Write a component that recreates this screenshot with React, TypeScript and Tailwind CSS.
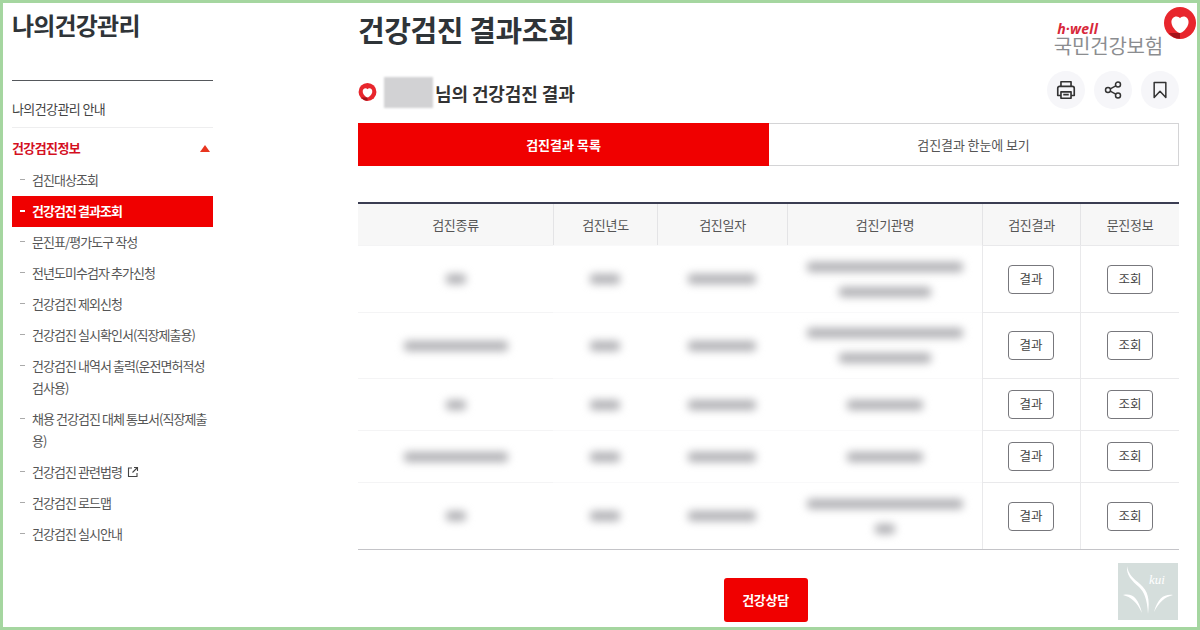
import React from "react";

const menuItems = [
  { label: "검진대상조회" },
  { label: "건강검진 결과조회", active: true },
  { label: "문진표/평가도구 작성" },
  { label: "전년도미수검자 추가신청" },
  { label: "건강검진 제외신청" },
  { label: "건강검진 실시확인서(직장제출용)" },
  { label: "건강검진 내역서 출력(운전면허적성검사용)" },
  { label: "채용 건강검진 대체 통보서(직장제출용)" },
  { label: "건강검진 관련법령", external: true },
  { label: "건강검진 로드맵" },
  { label: "건강검진 실시안내" },
];

const rows = [
  { h: "h-[67px]", a: 20, b: 30, c: 68, d: [156, 92] },
  { h: "h-[66px]", a: 104, b: 30, c: 68, d: [156, 92] },
  { h: "h-[52px]", a: 20, b: 30, c: 68, d: [76] },
  { h: "h-[52px]", a: 104, b: 30, c: 68, d: [76] },
  { h: "h-[67px]", a: 20, b: 30, c: 68, d: [156, 20] },
];

const cols = "grid grid-cols-[195px_104px_130px_195px_98px_99px]";

function Blur({ w }: { w: number }) {
  return <div className="h-[10px] rounded-sm bg-[#b0b0b4] blur-[4px]" style={{ width: w }} />;
}

function HeartMark({ className }: { className: string }) {
  return (
    <svg viewBox="0 0 34 34" className={className}>
      <circle cx="17" cy="16" r="16" fill="#e8262d" />
      <path d="M17 26c-2 0-8-5-8.500-10C8 12 10.500 9.500 13.500 9.500c1.500 0 2.700.7 3.500 1.800.8-1.100 2-1.800 3.500-1.800 3 0 5.500 2.500 5 6.500-.5 5-6.500 10-8.500 10z" fill="#fff" />
      <path d="M6 26h11v5.500c-4 .5-8-1.500-11-5.500z" fill="#a3121a" />
    </svg>
  );
}

function ActionButton({ children }: { children: React.ReactNode }) {
  return (
    <div className="flex h-[38px] w-[38px] items-center justify-center rounded-full bg-[#f6f6f9] text-[#333]">
      {children}
    </div>
  );
}

function CellButton({ label }: { label: string }) {
  return (
    <button className="flex h-[29px] w-[46px] items-center justify-center rounded-[4px] border border-[#77777c] bg-white text-[12.500px] text-[#444]">
      {label}
    </button>
  );
}

export default function App() {
  return (
    <div
      className="relative flex h-[630px] w-[1200px] overflow-hidden border-[3px] border-[#a5d6a0] bg-white text-[#333]"
      style={{ fontFamily: '"Noto Sans CJK KR", "Noto Sans", sans-serif' }}
    >
      <aside className="ml-[9px] w-[201px] shrink-0">
        <h1 className="mt-[5px] h-[72px] text-[24px] leading-[33px] font-bold tracking-[-0.8px] text-[#2f3438]">
          나의건강관리
        </h1>
        <div className="h-[47px] border-t border-[#55585c] pt-[17px] text-[13px] leading-[22px] tracking-[-0.6px] text-[#444]">
          나의건강관리 안내
        </div>
        <div className="flex h-[41px] items-center justify-between border-t border-[#eeeeef] pr-[3px] text-[13px] font-bold tracking-[-0.6px] text-[#d4101f]">
          건강검진정보
          <span className="h-0 w-0 border-x-[5px] border-b-[7px] border-x-transparent border-b-[#e8351f]" />
        </div>
        <ul className="-mt-[3px] text-[13px] leading-[22px] tracking-[-0.95px] text-[#555]">
          {menuItems.map((item) => (
            <li
              key={item.label}
              className={
                item.active
                  ? "relative bg-[#f00000] pt-[4px] pb-[5px] pl-[20px] font-bold text-white"
                  : "relative pt-[4px] pb-[5px] pl-[20px]"
              }
            >
              <span
                className={
                  item.active
                    ? "absolute top-[14px] left-[8px] h-[2px] w-[5px] bg-white"
                    : "absolute top-[14px] left-[8px] h-[1px] w-[5px] bg-[#aaa]"
                }
              />
              {item.label}
              {item.external && (
                <svg viewBox="0 0 12 12" className="ml-[5px] inline h-[12px] w-[12px] align-[-1px]" fill="none" stroke="#444" strokeWidth="1.100">
                  <path d="M5 2H1.500v8.500H10V7M7 1.500h3.500V5M10.500 1.500 5.500 6.500" />
                </svg>
              )}
            </li>
          ))}
        </ul>
      </aside>

      <main className="ml-[145px] w-[821px] shrink-0">
        <h2 className="mt-[6px] h-[49px] text-[29px] leading-[40px] font-bold tracking-[-0.4px] text-[#2f3438]">
          건강검진 결과조회
        </h2>
        <div className="mt-[13px] flex h-[41px] items-start justify-between">
          <div className="flex items-center pt-[6px]">
            <HeartMark className="h-[19px] w-[19px]" />
            <div className="mr-[2px] ml-[7px] h-[31px] w-[49px] bg-[#d2d2d4] blur-[1px]" />
            <span className="translate-y-[1px] text-[18px] font-bold tracking-[-0.1px] text-[#333]">님의 건강검진 결과</span>
          </div>
          <div className="flex gap-[9px]">
            <ActionButton>
              <svg viewBox="0 0 24 24" className="h-[22px] w-[22px]" fill="none" stroke="#333" strokeWidth="1.800" strokeLinejoin="round">
                <path d="M6.500 8V3h11v5M6.500 18H3V10a2 2 0 0 1 2-2h14a2 2 0 0 1 2 2v8h-3.500" />
                <path d="M6.500 14h11v7h-11zM9 17h6" />
              </svg>
            </ActionButton>
            <ActionButton>
              <svg viewBox="0 0 24 24" className="h-[20px] w-[20px]" fill="none" stroke="#333" strokeWidth="1.800">
                <circle cx="6" cy="12" r="3" />
                <circle cx="18" cy="5.500" r="3" />
                <circle cx="18" cy="18.500" r="3" />
                <path d="M8.700 10.600 15.300 7M8.700 13.400 15.300 17" />
              </svg>
            </ActionButton>
            <ActionButton>
              <svg viewBox="0 0 24 24" className="h-[20px] w-[20px]" fill="none" stroke="#333" strokeWidth="1.800" strokeLinejoin="round">
                <path d="M5 3h14v18l-7-7.500L5 21z" />
              </svg>
            </ActionButton>
          </div>
        </div>

        <div className="mt-[11px] grid h-[43px] grid-cols-[411px_1fr] text-[13px]">
          <div className="flex items-center justify-center bg-[#f00000] font-bold text-white">검진결과 목록</div>
          <div className="flex items-center justify-center border border-l-0 border-[#d4d4d6] tracking-[-0.1px] text-[#555]">
            검진결과 한눈에 보기
          </div>
        </div>

        <div className="mt-[36px] border-t-2 border-b border-t-[#3b3d52] border-b-[#c4c4c8]">
          <div className={`${cols} h-[41px] bg-[#f7f7f7] text-[13px] text-[#555]`}>
            {["검진종류", "검진년도", "검진일자", "검진기관명", "검진결과", "문진정보"].map((title, i) => (
              <div
                key={title}
                className={
                  i === 0
                    ? "flex items-center justify-center tracking-[-0.3px]"
                    : "flex items-center justify-center border-l border-[#e4e4e6] tracking-[-0.3px]"
                }
              >
                {title}
              </div>
            ))}
          </div>
          {rows.map((row, i) => (
            <div key={i} className={`${cols} ${row.h}`}>
              <div className="flex items-center justify-center border-t border-[#f4f4f5]">
                <Blur w={row.a} />
              </div>
              <div className="flex items-center justify-center border-t border-[#f9f9fa]">
                <Blur w={row.b} />
              </div>
              <div className="flex items-center justify-center border-t border-[#f9f9fa]">
                <Blur w={row.c} />
              </div>
              <div className="flex flex-col items-center justify-center gap-[15px] border-t border-[#f9f9fa]">
                {row.d.map((w) => (
                  <Blur key={w} w={w} />
                ))}
              </div>
              <div className="flex items-center justify-center border-t border-l border-[#e9e9eb] pr-[1px]">
                <CellButton label="결과" />
              </div>
              <div className="flex items-center justify-center border-t border-l border-[#e9e9eb]">
                <CellButton label="조회" />
              </div>
            </div>
          ))}
        </div>

        <div className="mt-[28px] flex justify-center pr-[6px]">
          <button className="flex h-[44px] w-[84px] items-center justify-center rounded-[3px] bg-[#f00000] text-[13px] font-bold tracking-[-0.3px] text-white">
            건강상담
          </button>
        </div>
      </main>

      {/* logo, top right */}
      <div className="absolute top-[19px] right-[34px] text-right">
        <div className="pr-[65px] text-[14px] leading-[14px] font-bold tracking-[0.2px] text-[#d8283a] italic" style={{ fontFamily: '"Open Sans", sans-serif' }}>
          h·well
        </div>
        <div className="text-[20px] leading-[20px] tracking-[-0.2px] text-[#8b8d90]">국민건강보험</div>
      </div>
      <HeartMark className="absolute top-[4px] right-0 h-[34px] w-[34px]" />

      {/* watermark */}
      <div className="absolute top-[560px] right-[19px] h-[57px] w-[60px] bg-[#d5dedc]">
        <svg viewBox="0 0 60 57" className="h-full w-full" fill="#fff">
          <path d="M9 3c-1 9 5 15 12 21 5 5 8 11 9 27 2-15 0-23-8-30C16 16 10 11 9 3z" />
          <path d="M5 32c9-2 15 2 19 18-5-11-11-16-19-18zM55 32c-9-1-15 3-19 17 5-10 11-15 19-17z" />
          <text x="31" y="21" fontSize="13" fontStyle="italic" fontFamily="Liberation Serif, serif">kui</text>
        </svg>
      </div>
    </div>
  );
}
